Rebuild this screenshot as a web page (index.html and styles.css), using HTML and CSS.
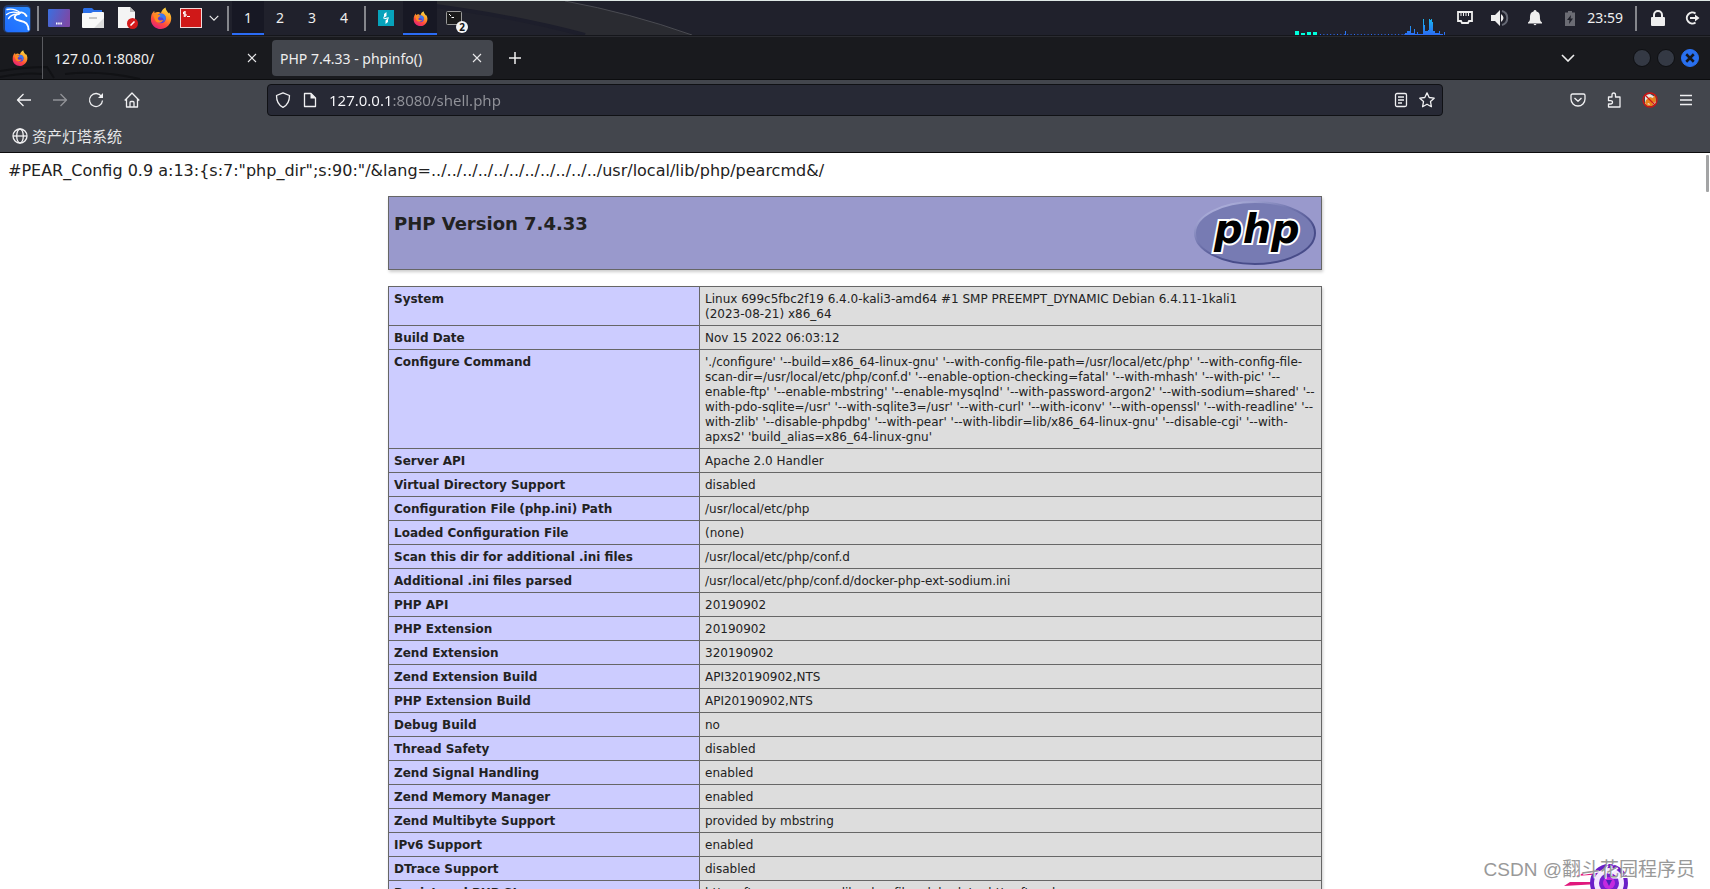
FILE: index.html
```html
<!DOCTYPE html>
<html lang="en">
<head>
<meta charset="utf-8">
<title>PHP 7.4.33 - phpinfo()</title>
<link rel="stylesheet" href="styles.css">
</head>
<body>
<svg class="defs" width="0" height="0" aria-hidden="true">
  <defs>
    <linearGradient id="flame" x1="0.8" y1="0" x2="0.3" y2="1">
      <stop offset="0" stop-color="#ffe14a"/><stop offset="0.4" stop-color="#ff9a26"/><stop offset="0.7" stop-color="#ff4a3c"/><stop offset="1" stop-color="#e3207c"/>
    </linearGradient>
    <linearGradient id="desk" x1="0" y1="0" x2="1" y2="0.3">
      <stop offset="0" stop-color="#3a6fe0"/><stop offset="1" stop-color="#7a4aa8"/>
    </linearGradient>
    <linearGradient id="kali" x1="0" y1="1" x2="1" y2="0">
      <stop offset="0" stop-color="#1f6bff"/><stop offset="1" stop-color="#2b8bff"/>
    </linearGradient>
    <linearGradient id="rim" x1="0.2" y1="0" x2="0.8" y2="0.8">
      <stop offset="0" stop-color="#b5b7e0"/><stop offset="0.4" stop-color="#777bb3"/><stop offset="0.8" stop-color="#484c89"/>
    </linearGradient>
    <linearGradient id="load" x1="0" y1="0" x2="0" y2="1">
      <stop offset="0" stop-color="#19b5f0"/><stop offset="1" stop-color="#2b6cf5"/>
    </linearGradient>
    <symbol id="firefox" viewBox="0 0 24 24">
      <path fill="url(#flame)" d="M2.2 7.2 4.6 4.1 5 6.6C6.4 5.5 8 5.2 9.500 5.500L12 6.600C12.500 4 14.500 1.800 17 .5 16.800 3 19 4.500 20.300 7L20.700 5.800C23.500 9 24 14 21.800 17.800 19.500 22 15.800 24 12 24 5.500 24 1 19.200 1 13.500 1 11 1.300 9 2.200 7.200Z"/>
      <circle cx="12" cy="12.500" r="5.300" fill="#5b3fd0"/>
      <path fill="#3a7af0" d="M8 9C10 6.800 14.500 6.700 16.500 9.500 17.700 12 17 14.500 14.500 16 16 13 14 11 11 11.500Z"/>
      <path fill="#ff8a20" d="M3.500 8.500C6.500 7 8.500 8.500 11.500 8.800 11 10.700 8.800 10.600 8.500 12.800 9.200 15.200 12.500 15 14.500 14 12.500 18.500 7 18 5.300 14Z"/>
    </symbol>
    <symbol id="cross" viewBox="0 0 10 10"><path d="M1 1 9 9M9 1 1 9" stroke="#e8e8ea" stroke-width="1.1" fill="none"/></symbol>
    <symbol id="chevron" viewBox="0 0 14 8"><path d="M1 1 7 7 13 1" stroke="currentColor" stroke-width="1.6" fill="none"/></symbol>
  </defs>
</svg>

<header class="panel">
  <svg class="wallpaper" width="300" height="34" viewBox="0 0 300 34" aria-hidden="true"><path d="M0 0H165Q230 12 292 34H180Q100 10 0 0Z" fill="#2a2b31"/><path d="M20 3Q110 14 185 34" fill="none" stroke="#1d1e2b" stroke-width="4"/><path d="M165 0Q230 12 292 34" fill="none" stroke="#4a4b52"/></svg>
  <button class="kali" aria-label="Applications"><svg width="32" height="32" viewBox="0 0 32 32"><rect x="2" y="3" width="28" height="28" rx="5" fill="#2478ff" opacity=".3"/><rect x="4" y="5" width="25" height="25" rx="3" fill="url(#kali)"/><g fill="none" stroke="#fff" stroke-linecap="round"><path stroke-width="1.300" d="M6 7.500C11 6.500 16 8 19.500 11M5.500 12.500C9 9.500 13 9.500 18 11M7.500 16.500C10 13 13 12 16.500 12.300"/><path stroke-width="1.900" d="M18 11C21 9.500 24 11.500 25.500 14M18 12C15 12 13 14 14 16.500 16 19.500 22 18 25.500 21.500 27 23.500 27.500 25.500 27.500 27.500"/></g></svg></button>
  <i class="sep"></i>
  <nav class="launchers">
    <button aria-label="Show desktop"><svg width="22" height="18" viewBox="0 0 22 18"><rect width="22" height="18" rx="1" fill="url(#desk)"/><path d="M8 14.500h6" stroke="#fff" stroke-width="2" stroke-dasharray="1.500 .7"/></svg></button>
    <button aria-label="Files"><svg width="22" height="20" viewBox="0 0 22 20"><path d="M2 0H10L12 2H20V7H1V1Z" fill="#2b6fe8"/><path d="M0 6Q0 5 1 5H9L11 4H21Q22 4 22 5V19Q22 20 21 20H1Q0 20 0 19Z" fill="#f8f8f8"/><path d="M22 10V20H12Z" fill="#ddd"/><path d="M7 10h8" stroke="#c8c8c8" stroke-width="2"/></svg></button>
    <button aria-label="Text editor"><svg width="22" height="22" viewBox="0 0 22 22"><path d="M2 0H14L19 5V21H2Z" fill="#f4f4f4"/><path d="M14 0V5H19Z" fill="#bbb"/><circle cx="16.500" cy="16.500" r="5.500" fill="#d41a1a"/><path d="M14.500 18.500 18.500 14.500" stroke="#fff" stroke-width="1.600"/></svg></button>
    <button aria-label="Firefox"><svg width="22" height="22"><use href="#firefox"/></svg></button>
    <button class="narrow" aria-label="Terminal"><svg width="22" height="20" viewBox="0 0 22 20"><rect x=".5" y=".5" width="21" height="19" fill="#d01818" stroke="#f0dada"/><path d="M6 4H3.500V6H6V8H3.500M4.800 3V9M7 8.500H10" stroke="#fff" fill="none"/></svg></button>
    <button class="more" aria-label="More terminals"><svg width="10" height="6"><use href="#chevron"/></svg></button>
  </nav>
  <i class="sep"></i>
  <nav class="spaces">
    <button class="current">1</button><button>2</button><button>3</button><button>4</button>
  </nav>
  <i class="sep"></i>
  <nav class="tasks">
    <button aria-label="Burp Suite"><svg width="16" height="16" viewBox="0 0 16 16"><rect width="16" height="16" fill="#07a3bb"/><path d="M8.500 2V6L5 8.500 6 6V4ZM5 8.500 10.500 7.200 11 8 7 9.200ZM7.500 14V10.500L11 7.500 10 10V12Z" fill="#fff"/></svg></button>
    <button class="current" aria-label="phpinfo - Firefox"><svg width="15" height="15"><use href="#firefox"/></svg></button>
    <button aria-label="Terminal windows"><svg width="16" height="14" viewBox="0 0 16 14"><rect x=".5" y=".5" width="15" height="13" rx="1" fill="#1b1b1b" stroke="#999"/><path d="M3 3 5 5M5.500 6.500H8" stroke="#fff"/></svg><span class="badge">2</span></button>
  </nav>
  <div class="tray">
    <svg class="load" width="152" height="18" viewBox="0 0 152 18"><path fill="#0fd" d="M0 14h4v4H0zM6 16h4v2H6zM12 15h4v3h-4zM18 15h4v3h-4z"/><path stroke="#2b6cf5" stroke-dasharray="1 2.400" d="M25 17.500H110"/><path fill="url(#load)" d="M50 14h1v4h-1zM110 17V16h2V14h3V9h1v7h3V12h1v5h2V15h1v2h5V2h1v6h1v6h3V13h1V2h1v1h1V2h1v3h1v9h2v2h4v-2h1v3h3v1h1v-3h1v3h-42z"/></svg>
    <button aria-label="Network"><svg width="16" height="14" viewBox="0 0 16 14"><path d="M1 1H15V10H12L11 12H5L4 10H1Z" fill="none" stroke="#eee" stroke-width="1.800"/><path d="M4 2v3M6.500 2v3M9 2v3M11.500 2v3" stroke="#eee"/></svg></button>
    <button aria-label="Volume"><svg width="18" height="16" viewBox="0 0 18 16"><path d="M0 5H4L9 0V16L4 11H0Z" fill="#eee"/><path d="M10 4Q15 8 10 12" fill="#eee"/><path d="M11 1C18 3 18 13 11 15" stroke="#666975" stroke-width="2" fill="none"/></svg></button>
    <button aria-label="Notifications"><svg width="14" height="16" viewBox="0 0 14 16"><path d="M7 0C8.500 0 8.500 1.500 8.500 1.500 12 2.500 12 5 12 9Q12 11 14 12.500V13.500H0V12.500Q2 11 2 9C2 5 2 2.500 5.500 1.500 5.500 0 7 0 7 0ZM5.500 14H8.500Q7 16.500 5.500 14Z" fill="#eee"/></svg></button>
    <button aria-label="Battery"><svg width="10" height="15" viewBox="0 0 10 15"><path d="M3 0H7V1.500H10V15H0V1.500H3Z" fill="#6b6c74"/><path d="M6 4 2 9H4.500L4 13 8 7.500H5.500Z" fill="#1f202a"/></svg></button>
    <time>23:59</time>
    <i class="sep"></i>
    <button aria-label="Lock"><svg width="14" height="16" viewBox="0 0 14 16"><rect y="7" width="14" height="9" rx="1" fill="#eee"/><path d="M3 8V5a4 4 0 0 1 8 0V8" fill="none" stroke="#eee" stroke-width="2"/></svg></button>
    <button aria-label="Log out"><svg width="15" height="14" viewBox="0 0 15 14"><path d="M10.500 2.500A5.500 5.500 0 1 0 10.500 11.500" fill="none" stroke="#eee" stroke-width="2"/><path d="M5 6H10V3.500L14.500 7 10 10.500V8H5Z" fill="#eee"/></svg></button>
  </div>
</header>

<div class="tabbar">
  <svg class="dragon" width="250" height="14" viewBox="0 0 250 14" aria-hidden="true"><path d="M0 6Q25 2 47 2L54 13M0 12Q25 7 42 9M65 9Q100 5 140 14" fill="none" stroke="#111215" stroke-width="2"/></svg>
  <button class="view" aria-label="Firefox View"><svg width="16" height="16"><use href="#firefox"/></svg></button>
  <div class="tab first"><span>127.0.0.1:8080/</span><button aria-label="Close tab"><svg width="10" height="10"><use href="#cross"/></svg></button></div>
  <div class="tab active"><span>PHP 7.4.33 - phpinfo()</span><button aria-label="Close tab"><svg width="10" height="10"><use href="#cross"/></svg></button></div>
  <button class="new" aria-label="New tab"><svg width="12" height="12" viewBox="0 0 12 12"><path d="M6 0V12M0 6H12" stroke="#f0f0f0" stroke-width="1.500"/></svg></button>
  <button class="list" aria-label="List all tabs"><svg width="14" height="8"><use href="#chevron"/></svg></button>
  <div class="window">
    <button aria-label="Minimize"></button><button aria-label="Maximize"></button><button class="close" aria-label="Close"><svg width="10" height="10" viewBox="0 0 8 8"><path d="M1 1 7 7M7 1 1 7" stroke="#15171c" stroke-width="2"/></svg></button>
  </div>
</div>

<div class="toolbar">
  <button aria-label="Back"><svg width="16" height="16" viewBox="0 0 16 16"><path d="M15 8H1.500M7.500 2 1.500 8 7.500 14"/></svg></button>
  <button class="off" aria-label="Forward"><svg width="16" height="16" viewBox="0 0 16 16"><path d="M1 8H14.500M8.500 2 14.500 8 8.500 14"/></svg></button>
  <button aria-label="Reload"><svg width="16" height="16" viewBox="0 0 16 16"><path d="M13.500 4.500A6.500 6.500 0 1 0 14.500 8.500"/><path d="M15 1V6H10Z" class="solid"/></svg></button>
  <button aria-label="Home"><svg width="16" height="16" viewBox="0 0 16 16"><path d="M.7 8.500 8 1 15.300 8.500M2.500 7V15H13.500V7M6 15V10.500Q6 9.500 7 9.500H9Q10 9.500 10 10.500V15"/></svg></button>
  <form class="url">
    <svg width="16" height="16" viewBox="0 0 16 16"><path d="M8 .8 14.500 3.500C14.500 9 13 13 8 15.300 3 13 1.500 9 1.500 3.500Z"/></svg>
    <svg width="16" height="16" viewBox="0 0 16 16"><path d="M2.500 1.500H9L13.500 6V14.500H2.500Z"/><path d="M8.500 1V6.500H14Z" class="solid"/></svg>
    <input type="text" aria-label="Address" value="127.0.0.1:8080/shell.php">
    <button type="button" aria-label="Reader view"><svg width="14" height="16" viewBox="0 0 14 16"><rect x="1.500" y="1.500" width="11" height="13" rx="1.500"/><path d="M4 5h6M4 8h6M4 11h4"/></svg></button>
    <button type="button" aria-label="Bookmark"><svg width="16" height="16" viewBox="0 0 16 16"><path d="M8 .9 10.200 5.500 15.200 6.200 11.500 9.600 12.400 14.700 8 12.200 3.600 14.700 4.500 9.600 .8 6.200 5.800 5.500Z"/></svg></button>
  </form>
  <button aria-label="Pocket"><svg width="16" height="16" viewBox="0 0 16 16"><path d="M2.500 2H13.500Q15 2 15 3.500V7A7 7 0 0 1 1 7V3.500Q1 2 2.500 2ZM4.500 6 8 9.300 11.500 6"/></svg></button>
  <button aria-label="Extensions"><svg width="16" height="16" viewBox="0 0 16 16"><path d="M6 5V3Q6 1 7.700 1 9.500 1 9.500 3V5H14V15H2.500V12H4.500Q6.500 12 6.500 10.300 6.500 8.700 4.500 8.700H2.500V5Z"/></svg></button>
  <button aria-label="FoxyProxy"><svg width="16" height="16" viewBox="0 0 16 16"><path class="face" d="M3 3 8 2 13 5 14 12 8 14 3 12Z"/><path class="fox" d="M4 8 8 5 11 6 13 2 14 9 10 14H5L3 11Z"/><path class="face" d="M5 12 7 11 8 13ZM10 12 12 10V12Z"/><g class="ban"><circle cx="8" cy="8" r="7"/><path d="M3 3 13 13"/></g></svg></button>
  <button aria-label="Menu"><svg width="14" height="12" viewBox="0 0 14 12"><path d="M1 1.500H13M1 6H13M1 10.500H13"/></svg></button>
</div>

<div class="bookmarks">
  <a href="#"><svg width="16" height="16" viewBox="0 0 16 16"><circle cx="8" cy="8" r="7"/><ellipse cx="8" cy="8" rx="3.300" ry="7"/><path d="M1 8H15"/></svg>资产灯塔系统</a>
</div>

<main class="page">
  <p class="pear">#PEAR_Config 0.9 a:13:{s:7:"php_dir";s:90:"/&amp;lang=../../../../../../../../../../../usr/local/lib/php/pearcmd&amp;/</p>
  <section class="banner">
    <h1>PHP Version 7.4.33</h1>
    <svg width="122" height="64" viewBox="0 0 122 64" role="img" aria-label="PHP logo"><ellipse cx="61" cy="32" rx="60" ry="31" fill="#777bb3" stroke="url(#rim)" stroke-width="2"/><text x="20" y="42" class="logo">php</text></svg>
  </section>
  <table class="info">
    <tbody>
      <tr><th scope="row">System</th><td>Linux 699c5fbc2f19 6.4.0-kali3-amd64 #1 SMP PREEMPT_DYNAMIC Debian 6.4.11-1kali1<br>(2023-08-21) x86_64</td></tr>
      <tr><th scope="row">Build Date</th><td>Nov 15 2022 06:03:12</td></tr>
      <tr><th scope="row">Configure Command</th><td>'./configure' '--build=x86_64-linux-gnu' '--with-config-file-path=/usr/local/etc/php' '--with-config-file-<br>scan-dir=/usr/local/etc/php/conf.d' '--enable-option-checking=fatal' '--with-mhash' '--with-pic' '--<br>enable-ftp' '--enable-mbstring' '--enable-mysqlnd' '--with-password-argon2' '--with-sodium=shared' '--<br>with-pdo-sqlite=/usr' '--with-sqlite3=/usr' '--with-curl' '--with-iconv' '--with-openssl' '--with-readline' '--<br>with-zlib' '--disable-phpdbg' '--with-pear' '--with-libdir=lib/x86_64-linux-gnu' '--disable-cgi' '--with-<br>apxs2' 'build_alias=x86_64-linux-gnu'</td></tr>
      <tr><th scope="row">Server API</th><td>Apache 2.0 Handler</td></tr>
      <tr><th scope="row">Virtual Directory Support</th><td>disabled</td></tr>
      <tr><th scope="row">Configuration File (php.ini) Path</th><td>/usr/local/etc/php</td></tr>
      <tr><th scope="row">Loaded Configuration File</th><td>(none)</td></tr>
      <tr><th scope="row">Scan this dir for additional .ini files</th><td>/usr/local/etc/php/conf.d</td></tr>
      <tr><th scope="row">Additional .ini files parsed</th><td>/usr/local/etc/php/conf.d/docker-php-ext-sodium.ini</td></tr>
      <tr><th scope="row">PHP API</th><td>20190902</td></tr>
      <tr><th scope="row">PHP Extension</th><td>20190902</td></tr>
      <tr><th scope="row">Zend Extension</th><td>320190902</td></tr>
      <tr><th scope="row">Zend Extension Build</th><td>API320190902,NTS</td></tr>
      <tr><th scope="row">PHP Extension Build</th><td>API20190902,NTS</td></tr>
      <tr><th scope="row">Debug Build</th><td>no</td></tr>
      <tr><th scope="row">Thread Safety</th><td>disabled</td></tr>
      <tr><th scope="row">Zend Signal Handling</th><td>enabled</td></tr>
      <tr><th scope="row">Zend Memory Manager</th><td>enabled</td></tr>
      <tr><th scope="row">Zend Multibyte Support</th><td>provided by mbstring</td></tr>
      <tr><th scope="row">IPv6 Support</th><td>enabled</td></tr>
      <tr><th scope="row">DTrace Support</th><td>disabled</td></tr>
      <tr><th scope="row">Registered PHP Streams</th><td>https, ftps, compress.zlib, php, file, glob, data, http, ftp, phar</td></tr>
    </tbody>
  </table>
  <i class="thumb"></i>
  <div class="mark">
    <svg width="70" height="26" viewBox="0 0 70 26" aria-hidden="true"><path d="M12 13 22 9H40V11ZM0 23 6 19H34V21Z" fill="#e0187c"/><circle cx="45" cy="20" r="17" fill="#f4e8ff" stroke="#6a1fc8" stroke-width="4"/><circle cx="45" cy="20" r="10" fill="#7420d0"/><circle cx="45" cy="20" r="6" fill="#c42ae0"/><path d="M42 17H48L45 23Z" fill="#4a22b8"/></svg>
    <span>CSDN @翻斗花园程序员</span>
  </div>
</main>
</body>
</html>
```
FILE: styles.css
```css
* { box-sizing: border-box; }
body {
  margin: 0;
  height: 100vh;
  overflow: hidden;
  display: flex;
  flex-direction: column;
  background: #fff;
  color: #eee;
  font: 14px/20px "Noto Sans", "Noto Sans CJK SC", sans-serif;
}
.defs { position: absolute; }
svg { flex: none; }
button {
  display: flex;
  align-items: center;
  justify-content: center;
  padding: 0;
  border: 0;
  background: none;
  color: inherit;
  font: inherit;
}

/* desktop panel */
.panel {
  position: relative;
  display: flex;
  align-items: stretch;
  flex: none;
  height: 36px;
  border-top: 1px solid #dfe9e6;
  border-bottom: 1px solid #15161b;
  background: #20212c;
}
.wallpaper { position: absolute; left: 400px; top: 0; }
.kali { width: 33px; }
.sep {
  flex: none;
  align-self: center;
  width: 2px;
  height: 25px;
  margin: 0 3px 0 4px;
  background: #85868c;
}
.launchers, .spaces, .tasks, .tray { display: flex; }
.launchers button { width: 34px; }
.launchers .narrow { width: 26px; }
.launchers .more { width: 19px; }
.spaces button, .tasks button { border-top: 2px solid transparent; border-bottom: 2px solid transparent; }
.spaces button { width: 32px; }
.tasks button { position: relative; width: 34px; }
.panel .current { background: #171824; border-bottom-color: #2b6cf5; }
.badge {
  position: absolute;
  right: 3px;
  bottom: 0;
  width: 12px;
  height: 12px;
  border-radius: 50%;
  background: #f4f4f4;
  color: #111;
  font: bold 10px/12px "Noto Sans", sans-serif;
}
.tray { margin-left: auto; }
.tray button { width: 35px; }
.load { align-self: flex-end; }
.tray time { padding: 0 8px 0 0; line-height: 33px; }

/* tabs */
.tabbar {
  position: relative;
  display: flex;
  align-items: center;
  flex: none;
  height: 44px;
  border-top: 1px solid #2a2b31;
  border-bottom: 1px solid #0c0d0f;
  background: #191a1e;
}
.dragon { position: absolute; left: 0; bottom: 0; }
.view { position: relative; width: 43px; height: 42px; border-right: 1px solid #5a5b60; padding-right: 2px; }
.tab {
  display: flex;
  align-items: center;
  justify-content: space-between;
  width: 221px;
  height: 36px;
  padding: 0 11px 0 8px;
  border-radius: 4px;
}
.tab span { padding-top: 2px; }
.tab.first { position: relative; width: 229px; padding: 0 15px 0 11px; }
.tab.active { position: relative; background: #43464d; }
.new { width: 43px; }
.list { margin-left: auto; width: 36px; }
.window { display: flex; gap: 6px; padding: 0 11px 0 47px; }
.window button { width: 18px; height: 18px; border-radius: 50%; background: #343944; border: 1px solid #0e0f12; }
.window .close { background: #2970f0; border-color: #2970f0; }

/* navigation */
.toolbar {
  display: flex;
  align-items: center;
  flex: none;
  height: 40px;
  padding: 0 6px;
  background: #43464d;
}
.toolbar > button { width: 36px; height: 32px; }
.toolbar svg, .bookmarks svg { fill: none; stroke: #f0f0f2; stroke-width: 1.3; stroke-linejoin: round; }
.toolbar .solid { fill: #f0f0f2; stroke: none; }
.toolbar .off { opacity: .45; }
.toolbar .fox { fill: #e8821c; stroke: none; }
.toolbar .face { fill: #e8e4e0; stroke: none; }
.toolbar .ban { stroke: #d01414; }
.url {
  display: flex;
  align-items: center;
  flex: 1;
  gap: 11px;
  height: 32px;
  margin: 0 117px;
  padding: 0 7px;
  border: 1px solid #101115;
  border-radius: 4px;
  background: #272935;
}
.url input {
  flex: 1;
  min-width: 0;
  padding: 0;
  border: 0;
  outline: 0;
  background: linear-gradient(90deg, #fbfbfe 61px, #919299 61px);
  background-clip: text;
  -webkit-background-clip: text;
  color: transparent;
  font-family: inherit;
  font-size: 15px;
}
.bookmarks {
  flex: none;
  height: 33px;
  padding: 6px 12px;
  border-bottom: 1px solid #0c0c0d;
  background: #43464d;
  font-size: 15px;
}
.bookmarks a { display: inline-flex; align-items: center; gap: 4px; color: #e6e6e8; text-decoration: none; }

/* phpinfo */
.page {
  position: relative;
  flex: 1;
  min-height: 0;
  overflow: hidden;
  padding: 8px;
  color: #222;
  font-family: "DejaVu Sans", sans-serif;
}
.pear { margin: 0 0 16px; font-size: 16px; line-height: 19px; }
.banner, .info { width: 934px; max-width: 100%; margin: 0 auto 16px; box-shadow: 1px 2px 3px #ccc; }
.banner {
  display: flex;
  justify-content: space-between;
  padding: 4px 5px;
  border: 1px solid #666;
  background: #99c;
}
.banner h1 { margin: 12px 0 0; font-size: 18px; line-height: 21px; }
.logo {
  font: italic bold 40px "DejaVu Sans", sans-serif;
  fill: #000;
  stroke: #fff;
  stroke-width: 4px;
  paint-order: stroke;
}
.info { border-collapse: collapse; font-size: 12px; line-height: 15px; }
.info th, .info td { padding: 5px 5px 3px; border: 1px solid #666; text-align: left; vertical-align: top; }
.info th { width: 311px; background: #ccf; }
.info td { background: #ddd; }
.thumb { position: absolute; top: 2px; right: 1px; width: 3px; height: 37px; border-radius: 1px; background: #a3a4a5; }
.mark {
  position: absolute;
  right: 15px;
  bottom: 4px;
  color: #999;
  font: 19px/30px "Liberation Sans", "Noto Sans CJK SC", sans-serif;
  text-shadow: 1px 1px 0 #fff;
}
.mark svg { position: absolute; left: 80px; bottom: -4px; }
.mark span { position: relative; }
```
